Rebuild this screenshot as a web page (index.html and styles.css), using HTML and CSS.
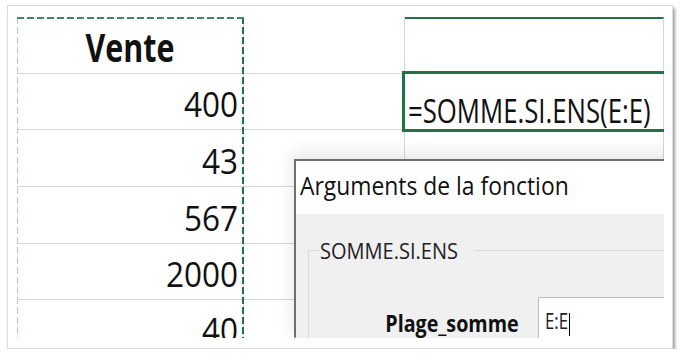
FILE: index.html
```html
<!DOCTYPE html>
<html lang="fr">
<head>
<meta charset="utf-8">
<title>SOMME.SI.ENS</title>
<link rel="stylesheet" href="styles.css">
</head>
<body>
<div class="frame">
  <div class="sheet">
    <div class="grid">
      <div class="cell head"><span class="t-vente">Vente</span></div>
      <div class="cell"></div>
      <div class="cell ctop"></div>

      <div class="cell num"><span class="t-num">400</span></div>
      <div class="cell"></div>
      <div class="cell formula"><span class="t-formula">=SOMME.SI.ENS(E:E)</span></div>

      <div class="cell num"><span class="t-num">43</span></div>
      <div class="cell"></div>
      <div class="cell"></div>

      <div class="cell num"><span class="t-num">567</span></div>
      <div class="cell"></div>
      <div class="cell"></div>

      <div class="cell num"><span class="t-num">2000</span></div>
      <div class="cell"></div>
      <div class="cell"></div>

      <div class="cell num"><span class="t-num">40</span></div>
      <div class="cell"></div>
      <div class="cell"></div>
    </div>

    <div class="marquee"></div>
    <div class="selection"></div>

    <div class="dialog">
      <div class="dlg-title"><span class="t-title">Arguments de la fonction</span></div>
      <div class="dlg-body">
        <div class="group">
          <div class="legend"><span class="t-legend">SOMME.SI.ENS</span></div>
          <div class="arg-row">
            <div class="arg-label"><span class="t-label">Plage_somme</span></div>
            <div class="arg-input"><span class="t-input">E:E</span><span class="caret"></span></div>
          </div>
        </div>
      </div>
    </div>
  </div>
</div>
</body>
</html>
```

FILE: styles.css
```css
html, body {
  margin: 0;
  padding: 0;
  background: #ffffff;
}

body {
  font-family: "Open Sans", "Noto Sans", "Liberation Sans", sans-serif;
  color: #111111;
}

.frame {
  margin: 5px 0 0 7px;
  width: 647px;
  height: 321px;
  padding: 11px 8px 10px 9px;
  border: 1px solid #dcdcdc;
  background: #ffffff;
  box-shadow: 2px 3px 3px rgba(0, 0, 0, 0.38);
}

.sheet {
  position: relative;
  width: 647px;
  height: 321px;
  overflow: hidden;
  background: #ffffff;
}

.grid {
  display: grid;
  grid-template-columns: 227px 161px 259px;
  grid-template-rows: 57px 56px 57px 57px 56px 56px;
}

.cell {
  box-sizing: border-box;
  border-right: 1px solid #d6d6d6;
  border-bottom: 1px solid #d6d6d6;
  display: flex;
  align-items: flex-end;
  white-space: nowrap;
}

.ctop {
  border-top: 2px solid #217346;
}

.head {
  justify-content: center;
  padding-bottom: 7px;
}

.t-vente {
  display: inline-block;
  font-weight: 700;
  font-size: 39px;
  line-height: 39px;
  transform: scaleX(0.78);
  transform-origin: center bottom;
}

.num {
  justify-content: flex-end;
  padding: 0 5px 8px 0;
}

.t-num {
  display: inline-block;
  font-size: 35px;
  line-height: 35px;
  transform: scaleX(0.9);
  transform-origin: right bottom;
}

.formula {
  justify-content: flex-start;
  padding: 0 0 2px 3px;
}

.t-formula {
  display: inline-block;
  font-size: 33px;
  line-height: 33px;
  transform: scaleX(0.78);
  transform-origin: left bottom;
}

.marquee {
  position: absolute;
  left: 0;
  top: 0;
  width: 227px;
  height: 100%;
  pointer-events: none;
  background:
    repeating-linear-gradient(90deg, #3f8a5c 0 7px, transparent 7px 10px) left top / 100% 2px no-repeat,
    repeating-linear-gradient(180deg, #217346 0 7px, transparent 7px 10px) right top / 2px 100% no-repeat,
    repeating-linear-gradient(180deg, #b8cdbf 0 7px, transparent 7px 10px) left top / 1px 100% no-repeat;
}

.selection {
  position: absolute;
  left: 385px;
  top: 54px;
  width: 300px;
  height: 61px;
  box-sizing: border-box;
  border: 3px solid #217346;
}

.dialog {
  position: absolute;
  left: 277px;
  top: 142px;
  width: 400px;
  height: 179px;
  box-sizing: border-box;
  border-top: 2px solid #6e6e6e;
  border-left: 2px solid #6e6e6e;
  border-bottom: 1px solid #c2c2c2;
  background: #f0f0f0;
  display: flex;
  flex-direction: column;
  box-shadow: 0 -5px 16px 2px rgba(0, 0, 0, 0.09);
}

.dlg-title {
  height: 53px;
  flex: none;
  background: #ffffff;
  padding-left: 4px;
  line-height: 49px;
  white-space: nowrap;
}

.t-title {
  display: inline-block;
  font-size: 25px;
  color: #111111;
  transform: scaleX(0.915);
  transform-origin: left center;
}

.dlg-body {
  flex: 1;
  background: #f0f0f0;
}

.group {
  margin: 36px 0 0 12px;
  border-top: 1px solid #d9d9d9;
  border-left: 1px solid #d9d9d9;
  height: 200px;
}

.legend {
  margin: -12px 0 0 11px;
  height: 22px;
  display: inline-block;
  vertical-align: top;
  background: #f0f0f0;
  padding: 0 2px 0 0;
  white-space: nowrap;
}

.t-legend {
  display: inline-block;
  font-size: 22px;
  line-height: 22px;
  color: #222222;
  transform: scaleX(0.91);
  transform-origin: left center;
}

.arg-row {
  display: flex;
  align-items: flex-start;
  margin-top: 24px;
}

.arg-label {
  flex: none;
  width: 210px;
  margin-top: 14px;
  text-align: right;
  white-space: nowrap;
}

.t-label {
  display: inline-block;
  font-weight: 700;
  font-size: 24px;
  line-height: 24px;
  color: #111111;
  transform: scaleX(0.82);
  transform-origin: right center;
}

.arg-input {
  flex: none;
  margin-left: 19px;
  width: 200px;
  height: 53px;
  box-sizing: border-box;
  border: 1px solid #bcbcbc;
  background: #ffffff;
  padding: 13px 0 0 6px;
  display: flex;
  align-items: flex-start;
  white-space: nowrap;
}

.t-input {
  display: inline-block;
  font-size: 21px;
  line-height: 21px;
  color: #222222;
  transform: scaleX(0.8);
  transform-origin: left center;
}

.caret {
  display: inline-block;
  width: 1px;
  height: 23px;
  margin: 2px 0 0 -5px;
  background: #000000;
}
```
